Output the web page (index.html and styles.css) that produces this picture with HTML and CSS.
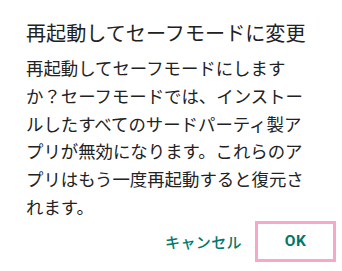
FILE: index.html
```html
<!DOCTYPE html>
<html lang="ja">
<head>
<meta charset="utf-8">
<link rel="stylesheet" href="styles.css">
</head>
<body>
<div class="dialog">
  <div class="title">再起動してセーフモードに変更</div>
  <div class="message">再起動してセーフモードにしますか？セーフモードでは、インストールしたすべてのサードパーティ製アプリが無効になります。これらのアプリはもう一度再起動すると復元されます。</div>
  <div class="actions">
    <div class="btn cancel">キャンセル</div>
    <div class="btn ok">OK</div>
  </div>
</div>
</body>
</html>
```
FILE: styles.css
```css
html, body {
  margin: 0;
  padding: 0;
  background: #ffffff;
}
.dialog {
  width: 342px;
  height: 271px;
  box-sizing: border-box;
  padding: 19px 0 0 26px;
  font-family: "Noto Sans CJK JP", "Noto Sans", sans-serif;
  color: #212121;
}
.title {
  font-size: 20.1px;
  line-height: 28px;
  white-space: nowrap;
}
.message {
  margin-top: 7px;
  width: 290px;
  font-size: 17.4px;
  line-height: 27.8px;
  color: #222222;
}
.actions {
  display: flex;
  justify-content: flex-end;
  align-items: center;
  padding-right: 6px;
  margin-top: 0px;
}
.btn {
  font-size: 15px;
  font-weight: 500;
  color: #00796b;
  letter-spacing: 0.4px;
}
.cancel {
  margin-right: 13px;
}
.ok {
  box-sizing: border-box;
  width: 81px;
  height: 41px;
  border: 3px solid #f7a8c8;
  display: flex;
  align-items: center;
  justify-content: center;
  font-family: "Roboto", "Noto Sans", sans-serif;
  font-weight: 700;
  font-size: 15.5px;
}
```
